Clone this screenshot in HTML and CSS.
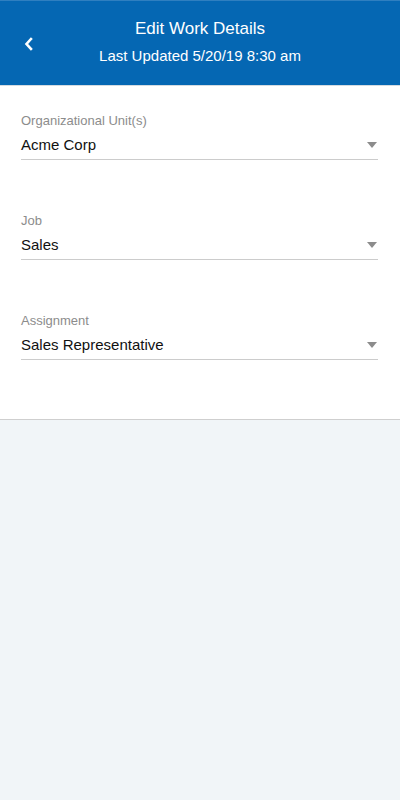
FILE: index.html
```html
<!DOCTYPE html>
<html lang="en">
<head>
    <meta charset="UTF-8">
    <meta name="viewport" content="width=device-width, initial-scale=1.0">
    <title>Edit Work Details</title>
    <link rel="stylesheet" href="styles.css">
</head>
<body>

<!-- Header -->
<div class="header">
    <button class="back-btn" aria-label="Back">
        <svg width="12" height="14" viewBox="0 0 12 14">
            <path d="M8 2 L3.5 7 L8 12" fill="none" stroke="#fff" stroke-width="2.6" stroke-linecap="square"/>
        </svg>
    </button>
    <div class="header-text">
        <div class="title">Edit Work Details</div>
        <div class="subtitle">Last Updated 5/20/19 8:30 am</div>
    </div>
</div>

<!-- Form -->
<div class="form">
    <div class="field">
        <div class="field-label">Organizational Unit(s)</div>
        <div class="field-value">
            <span>Acme Corp</span>
            <span class="caret"></span>
        </div>
    </div>
    <div class="field">
        <div class="field-label">Job</div>
        <div class="field-value">
            <span>Sales</span>
            <span class="caret"></span>
        </div>
    </div>
    <div class="field">
        <div class="field-label">Assignment</div>
        <div class="field-value">
            <span>Sales Representative</span>
            <span class="caret"></span>
        </div>
    </div>
</div>

</body>
</html>
```
FILE: styles.css
```css
html, body {
    margin: 0;
    padding: 0;
}
body {
    font-family: "Liberation Sans", Arial, sans-serif;
    background-color: #f1f5f8;
    width: 400px;
    min-height: 800px;
}
.header {
    position: relative;
    height: 85px;
    background-color: #0567b3;
    border-top: 1px solid #2f7fc0;
    box-sizing: border-box;
    color: #fff;
    display: flex;
    justify-content: center;
}
.back-btn {
    position: absolute;
    left: 22px;
    top: 36px;
    background: none;
    border: none;
    padding: 0;
    width: 14px;
    height: 14px;
    cursor: pointer;
}
.header-text {
    text-align: center;
    padding-top: 18px;
}
.title {
    font-size: 17px;
    line-height: 20px;
}
.subtitle {
    font-size: 15px;
    line-height: 18px;
    margin-top: 8px;
}
.form {
    background-color: #fff;
    border-top: 1px solid #d4dbe1;
    border-bottom: 1px solid #cfcfcf;
    padding: 27px 22px 0 21px;
    height: 335px;
    box-sizing: border-box;
}
.field {
    height: 100px;
}
.field-label {
    color: #8c8c8c;
    font-size: 13px;
    line-height: 16px;
}
.field-value {
    display: flex;
    justify-content: space-between;
    align-items: center;
    margin-top: 6px;
    padding-bottom: 4px;
    border-bottom: 1px solid #cccccc;
    font-size: 15px;
    line-height: 20px;
    color: #111;
}
.caret {
    width: 0;
    height: 0;
    border-left: 5px solid transparent;
    border-right: 5px solid transparent;
    border-top: 6px solid #8c8c8c;
    margin-right: 1px;
}
```
